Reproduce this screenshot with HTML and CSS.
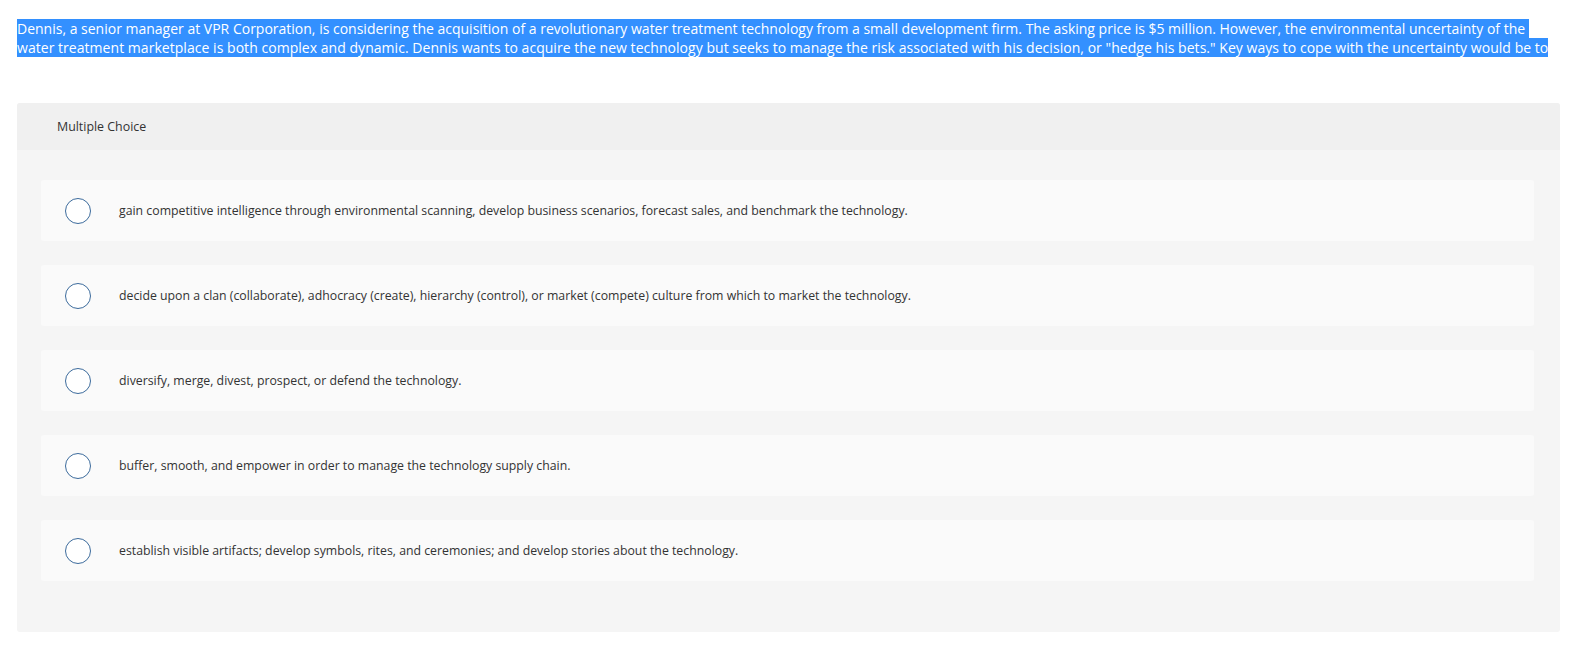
FILE: index.html
```html
<!DOCTYPE html>
<html>
<head>
<meta charset="utf-8">
<link rel="stylesheet" href="styles.css">
</head>
<body>
<div class="prompt">
  <div class="sel-line">Dennis, a senior manager at VPR Corporation, is considering the acquisition of a revolutionary water treatment technology from a small development firm. The asking price is $5 million. However, the environmental uncertainty of the&nbsp;</div>
  <div class="sel-line sel-line-wide">water treatment marketplace is both complex and dynamic. Dennis wants to acquire the new technology but seeks to manage the risk associated with his decision, or "hedge his bets." Key ways to cope with the uncertainty would be to</div>
</div>
<div class="panel">
  <div class="panel-header">Multiple Choice</div>
  <div class="panel-body">
    <div class="option"><span class="radio"></span><span class="label">gain competitive intelligence through environmental scanning, develop business scenarios, forecast sales, and benchmark the technology.</span></div>
    <div class="option"><span class="radio"></span><span class="label">decide upon a clan (collaborate), adhocracy (create), hierarchy (control), or market (compete) culture from which to market the technology.</span></div>
    <div class="option"><span class="radio"></span><span class="label">diversify, merge, divest, prospect, or defend the technology.</span></div>
    <div class="option"><span class="radio"></span><span class="label">buffer, smooth, and empower in order to manage the technology supply chain.</span></div>
    <div class="option"><span class="radio"></span><span class="label">establish visible artifacts; develop symbols, rites, and ceremonies; and develop stories about the technology.</span></div>
  </div>
</div>
</body>
</html>
```
FILE: styles.css
```css
html, body {
  margin: 0;
  padding: 0;
  background: #ffffff;
}
body {
  padding: 19px 15px 0 17px;
  font-family: "Open Sans", "Liberation Sans", sans-serif;
  color: #333333;
}
.prompt {
  display: flex;
  flex-direction: column;
  align-items: flex-start;
  font-size: 14px;
  line-height: 19px;
}
.sel-line {
  background: #3390ff;
  color: #ffffff;
  white-space: nowrap;
}
.sel-line-wide {
  letter-spacing: 0.04px;
}
.panel {
  margin-top: 46px;
  width: 1543px;
  border-radius: 3px;
  overflow: hidden;
  background: #f5f5f5;
}
.panel-header {
  height: 47px;
  background: #f0f0f0;
  display: flex;
  align-items: center;
  padding-left: 40px;
  font-size: 12.4px;
  color: #333333;
}
.panel-body {
  padding: 30px 26px 51px 24px;
  display: flex;
  flex-direction: column;
  gap: 24px;
}
.option {
  height: 61px;
  background: #fafafa;
  border-radius: 3px;
  display: flex;
  align-items: center;
  padding-left: 24px;
  gap: 28px;
}
.radio {
  box-sizing: border-box;
  width: 26px;
  height: 26px;
  border-radius: 50%;
  border: 1.5px solid #3c6b9c;
  background: #ffffff;
  flex: none;
}
.label {
  font-size: 12.3px;
  color: #333333;
}
```
